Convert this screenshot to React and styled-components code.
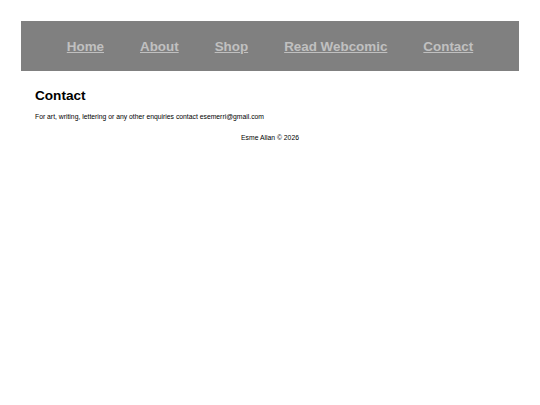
import React from "react";
import styled, { createGlobalStyle } from "styled-components";

const GlobalStyle = createGlobalStyle`
  html, body {
    margin: 0;
    padding: 0;
    background: #ffffff;
    font-family: "Liberation Sans", Arial, sans-serif;
    color: #000000;
  }
`;

const Page = styled.div`
  padding: 21px 21px 0 21px;
`;

const Nav = styled.nav`
  background-color: #808080;
  height: 50px;
  display: flex;
  justify-content: center;
  align-items: center;
  gap: 36px;
`;

const NavLink = styled.a`
  color: #c0c0c0;
  font-size: 13.4px;
  font-weight: bold;
  text-decoration: underline;
  cursor: pointer;
`;

const Main = styled.main`
  padding: 0 14px;
`;

const Heading = styled.h2`
  font-size: 13.6px;
  font-weight: bold;
  margin: 17px 0 10px 0;
`;

const Text = styled.p`
  font-size: 6.8px;
  margin: 0;
`;

const Footer = styled.footer`
  text-align: center;
  font-size: 6.8px;
  margin-top: 14px;
`;

const links = ["Home", "About", "Shop", "Read Webcomic", "Contact"];

export default function App() {
  return (
    <Page>
      <GlobalStyle />
      <Nav>
        {links.map((l) => (
          <NavLink key={l}>{l}</NavLink>
        ))}
      </Nav>
      <Main>
        <Heading>Contact</Heading>
        <Text>
          For art, writing, lettering or any other enquiries contact esemerri@gmail.com
        </Text>
      </Main>
      <Footer>Esme Allan © 2026</Footer>
    </Page>
  );
}
